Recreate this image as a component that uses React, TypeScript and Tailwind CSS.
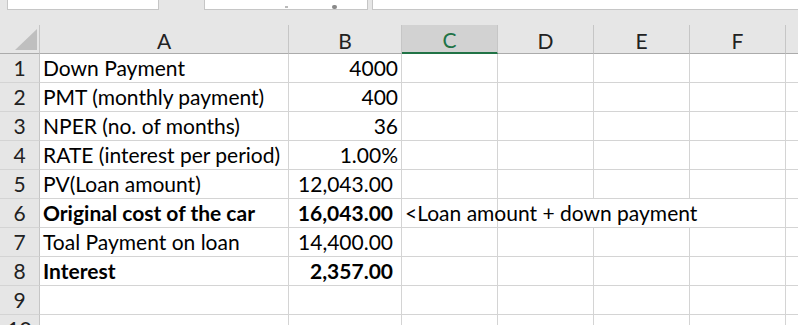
const cols = ["A", "B", "C", "D", "E", "F"];

type Row = { a?: string; b?: string; c?: string; bold?: boolean; fmt?: boolean };

const rows: Row[] = [
  { a: "Down Payment", b: "4000" },
  { a: "PMT (monthly payment)", b: "400" },
  { a: "NPER (no. of months)", b: "36" },
  { a: "RATE (interest per period)", b: "1.00%" },
  { a: "PV(Loan amount)", b: "12,043.00", fmt: true },
  { a: "Original cost of the car", b: "16,043.00", c: "<Loan amount + down payment", bold: true, fmt: true },
  { a: "Toal Payment on loan", b: "14,400.00", fmt: true },
  { a: "Interest", b: "2,357.00", bold: true, fmt: true },
  {},
  {},
];

const grid = "grid grid-cols-[40px_249px_113px_96px_96px_96px_96px_1fr]";

export default function App() {
  return (
    <div
      className="w-[798px] h-[325px] overflow-hidden bg-white text-black"
      style={{ fontFamily: "Lato, 'Liberation Sans', sans-serif" }}
    >
      {/* formula bar strip */}
      <div className="h-[25px] bg-[#e6e6e6] flex items-start">
        <div className="ml-[7px] w-[152px] h-[10px] bg-white border border-t-0 border-[#c6c6c6]" />
        <div className="ml-[45px] w-[164px] h-[10px] bg-white border border-t-0 border-[#c6c6c6] relative overflow-hidden">
          <span className="absolute left-[80px] top-[6px] w-[3px] h-[2px] bg-[#bbbbbb]" />
          <span className="absolute left-[127px] top-[5px] w-[5px] h-[4px] rounded-full bg-[#8a8a8a]" />
        </div>
        <div className="ml-[4px] flex-1 h-[10px] bg-white border border-t-0 border-r-0 border-[#c6c6c6]" />
      </div>

      {/* column headers */}
      <div className={`${grid} h-[29px] bg-[#e6e6e6] text-[21px] leading-none`}>
        <div className="border-r border-b border-[#ababab] border-r-[#c6c6c6] relative">
          <svg className="absolute left-[15px] top-[4px]" width="22" height="21" viewBox="0 0 22 21">
            <polygon points="22,0 22,21 0,21" fill="#bfbfbf" />
          </svg>
        </div>
        {cols.map((c) => (
          <div
            key={c}
            className={
              c === "C"
                ? "bg-[#d2d2d2] text-[#217346] border-r border-[#c6c6c6] border-b-2 border-b-[#217346] flex items-center justify-center pt-[2px]"
                : "text-[#222] border-r border-b border-[#c6c6c6] border-b-[#ababab] flex items-center justify-center pt-[2px]"
            }
          >
            {c}
          </div>
        ))}
        <div className="border-b border-[#ababab]" />
      </div>

      {/* rows */}
      {rows.map((r, i) => (
        <div key={i} className={`${grid} h-[29px] text-[21px] leading-none`}>
          <div className="bg-[#e6e6e6] border-r border-b border-[#d4d4d4] border-r-[#c6c6c6] flex items-end justify-center pb-[4px] text-[#222]">
            {i + 1}
          </div>
          <div
            className={`border-r border-b border-[#d4d4d4] flex items-end pl-[3px] pb-[4px] whitespace-nowrap ${
              r.bold ? "font-bold" : ""
            }`}
          >
            {r.a}
          </div>
          <div
            className={`border-r border-b border-[#d4d4d4] flex items-end justify-end pb-[4px] whitespace-nowrap ${
              r.fmt ? "pr-[8px]" : "pr-[3px]"
            } ${r.bold ? "font-bold" : ""}`}
          >
            {r.b}
          </div>
          <div className="border-r border-b border-[#d4d4d4] relative">
            {r.c && (
              <span className="absolute left-[3px] bottom-[4px] whitespace-nowrap">{r.c}</span>
            )}
          </div>
          <div className={`border-b border-[#d4d4d4] ${r.c ? "" : "border-r"}`} />
          <div className={`border-b border-[#d4d4d4] ${r.c ? "" : "border-r"}`} />
          <div className="border-r border-b border-[#d4d4d4]" />
          <div className="border-b border-[#d4d4d4]" />
        </div>
      ))}
    </div>
  );
}
